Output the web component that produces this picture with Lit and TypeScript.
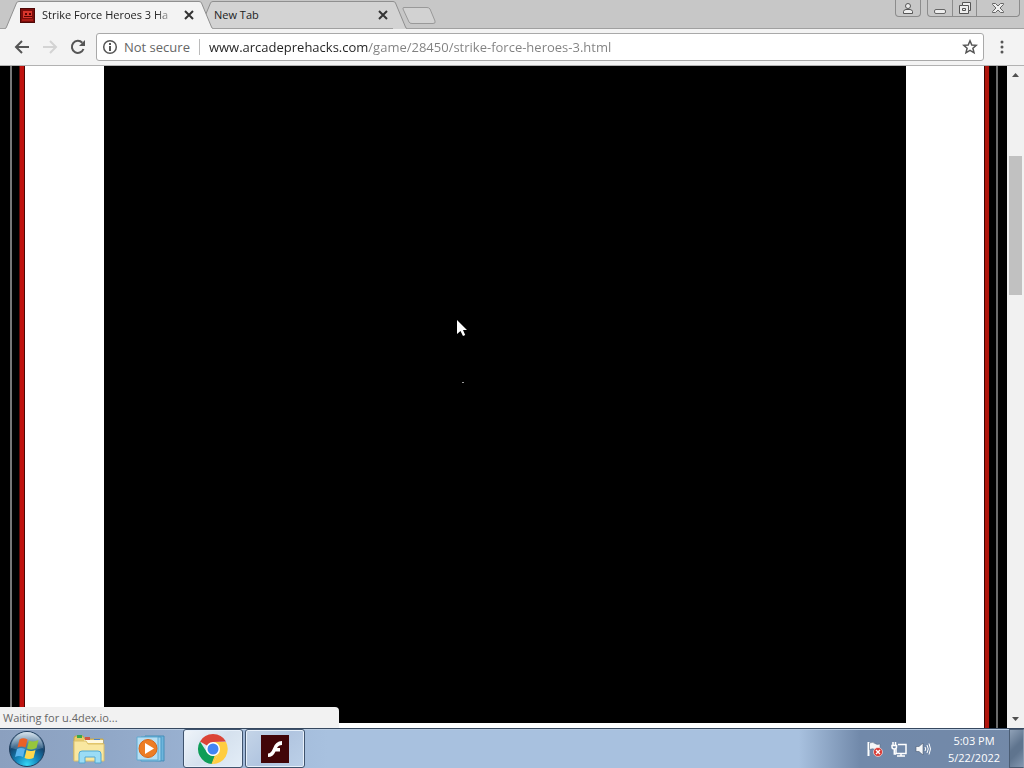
import { LitElement, html, css } from "lit";
import { customElement } from "lit/decorators.js";

const slantLeft = (fill: string) => html`
  <svg class="slant" width="14" height="28" viewBox="0 0 14 28" aria-hidden="true">
    <path d="M0 28L1.500 26L11.500 2Q12 .5 14 .5V28Z" fill=${fill} />
    <path d="M0 27.500Q1 27.500 1.500 26L11.500 2Q12 .5 14 .5" fill="none" stroke="#8f8f8f" />
  </svg>`;
const slantRight = (fill: string) => html`
  <svg class="slant" width="14" height="28" viewBox="0 0 14 28" aria-hidden="true">
    <path d="M14 28L12.500 26L2.500 2Q2 .5 0 .5V28Z" fill=${fill} />
    <path d="M14 27.500Q13 27.500 12.500 26L2.500 2Q2 .5 0 .5" fill="none" stroke="#8f8f8f" />
  </svg>`;
const cross = html`
  <svg width="10" height="10" viewBox="0 0 10 10" aria-hidden="true">
    <path d="M1 1L9 9M9 1L1 9" stroke="#333" stroke-width="2" />
  </svg>`;

@customElement("browser-tabs")
class BrowserTabs extends LitElement {
  static styles = css`
    :host { display: flex; height: 29px; background: #c7c7c7; padding-left: 5px; box-shadow: inset 0 -1px #a0a0a0; font: 11px/16px "Open Sans", "Noto Sans", sans-serif; color: #222; }
    .tab { display: flex; width: 208px; height: 28px; align-self: flex-end; }
    .tab + .tab { margin-left: -14px; }
    .active { position: relative; z-index: 1; }
    .slant { flex: none; display: block; }
    .face { flex: 1; min-width: 0; display: flex; align-items: center; gap: 7px; border-top: 1px solid #8f8f8f; background: #d3d3d3; border-bottom: 1px solid #a0a0a0; padding: 0 5px 0 1px; }
    .active .face { background: #f3f3f3; border-bottom-color: #f3f3f3; }
    .title { flex: 1; min-width: 0; overflow: hidden; white-space: nowrap; }
    .active .title { mask-image: linear-gradient(90deg, #000 84%, transparent); }
    button { border: 0; background: none; padding: 0; margin: 0; display: block; flex: none; }
    button svg, .fav { display: block; flex: none; }
    .new { align-self: flex-start; margin: 6px 0 0 -6px; }
    .controls { margin-left: auto; display: flex; gap: 6px; padding-right: 4px; align-items: flex-start; }
    .group { display: flex; border: 1px solid #8c8c8c; border-top: 0; border-radius: 0 0 4px 4px; height: 16px; }
    .group button { width: 24px; height: 16px; display: grid; place-items: center; }
    .group button + button { border-left: 1px solid #8c8c8c; }
    .group .close { width: 43px; }
  `;
  render() {
    return html`
      <div class="tab active">
        ${slantLeft("#f3f3f3")}
        <div class="face">
          <svg class="fav" width="15" height="15" viewBox="0 0 15 15" aria-hidden="true">
            <rect width="15" height="15" fill="#7c0d0b" /><path d="M3 3h9v7H3z" fill="#d9362c" />
            <path d="M5 5h2v2H5zM9 5h2v2H9zM4 8h8v1H4z" fill="#5b0503" /><path d="M2 12h11" stroke="#d62d22" />
            <rect x=".5" y=".5" width="14" height="14" fill="none" stroke="#4e0806" />
          </svg>
          <span class="title">Strike Force Heroes 3 Ha</span>
          <button aria-label="Close tab">${cross}</button>
        </div>
        ${slantRight("#f3f3f3")}
      </div>
      <div class="tab">
        ${slantLeft("#d3d3d3")}
        <div class="face"><span class="title">New Tab</span><button aria-label="Close tab">${cross}</button></div>
        ${slantRight("#d3d3d3")}
      </div>
      <button class="new" aria-label="New tab">
        <svg width="36" height="19" viewBox="0 0 36 19"><path d="M3 1.500H26Q28 1.500 29 3L34 15Q35 17.500 32 17.500H11Q8.500 17.500 8 16L2 3Q1.500 1.500 3 1.500Z" fill="#d2d2d2" stroke="#999" /></svg>
      </button>
      <div class="controls">
        <div class="group"><button aria-label="Profile">
          <svg width="12" height="13" viewBox="0 0 12 13" fill="#eee" stroke="#555"><circle cx="6" cy="4" r="2.500" /><path d="M1.500 11.500V9.500Q2 7.500 4 7.500H8Q10 7.500 10.500 9.500V11.500Z" /></svg>
        </button></div>
        <div class="group">
          <button aria-label="Minimize"><svg width="14" height="14" viewBox="0 0 14 14"><rect x="1.500" y="8.500" width="11" height="4" rx="1.500" fill="#eee" stroke="#666" /></svg></button>
          <button aria-label="Restore"><svg width="14" height="14" viewBox="0 0 14 14" fill="#eee" stroke="#555"><path d="M4.500 1.500H12.500V9.500H10.500V12.500H1.500V4.500H4.500Z" /><path d="M4.500 4.500H10.500V9.500M4.500 7.500H7.500V9.500H4.500Z" /></svg></button>
          <button class="close" aria-label="Close"><svg width="14" height="14" viewBox="0 0 14 14"><path d="M1.500 2.500H4.500L7 5L9.500 2.500H12.500V3.500L9 7L12.500 10.500V11.500H9.500L7 9L4.500 11.500H1.500V10.500L5 7L1.500 3.500Z" fill="#eee" stroke="#666" /></svg></button>
        </div>
      </div>`;
  }
}

@customElement("browser-toolbar")
class BrowserToolbar extends LitElement {
  static styles = css`
    :host { display: flex; align-items: center; height: 37px; box-sizing: border-box; background: #f3f3f3; border-bottom: 1px solid #b2b2b2; padding: 0 12px 0 12px; font: 13px/18px "Open Sans", "Noto Sans", sans-serif; }
    button { border: 0; background: none; padding: 0; flex: none; width: 20px; height: 20px; display: grid; place-items: center; }
    .nav { display: flex; gap: 8px; }
    .box { flex: 1; min-width: 0; height: 28px; box-sizing: border-box; border: 1px solid #a9a9a9; border-radius: 3px; background: #fff; display: flex; align-items: center; margin: 0 8px 0 8px; padding: 0 3px 0 5px; }
    .safe { color: #666; margin-left: 6px; white-space: nowrap; }
    .bar { width: 1px; height: 16px; background: #bbb; margin: 0 9px; }
    input { flex: 1; min-width: 0; border: 0; outline: 0; padding: 0; font: inherit; color: transparent; background: linear-gradient(90deg, #222 159px, #808080 159px) text; }
  `;
  render() {
    return html`
      <div class="nav">
        <button aria-label="Back"><svg width="16" height="16" viewBox="0 0 16 16"><path d="M15 8H2M8 2L2 8L8 14" fill="none" stroke="#555" stroke-width="2" /></svg></button>
        <button aria-label="Forward"><svg width="16" height="16" viewBox="0 0 16 16"><path d="M1 8H14M8 2L14 8L8 14" fill="none" stroke="#d3d3d3" stroke-width="2" /></svg></button>
        <button aria-label="Reload"><svg width="16" height="16" viewBox="0 0 16 16"><path d="M13.500 10A6 6 0 1 1 12.300 3.800" fill="none" stroke="#555" stroke-width="2" /><path d="M15 1V7H9Z" fill="#555" /></svg></button>
      </div>
      <div class="box">
        <svg width="16" height="16" viewBox="0 0 16 16" aria-hidden="true"><circle cx="8" cy="8" r="6.300" fill="none" stroke="#555" stroke-width="1.500" /><path d="M8 7V12M8 4V6" stroke="#555" stroke-width="2" /></svg>
        <span class="safe">Not secure</span><span class="bar"></span>
        <input aria-label="Address" value="www.arcadeprehacks.com/game/28450/strike-force-heroes-3.html" />
        <button aria-label="Bookmark this page"><svg width="16" height="16" viewBox="0 0 16 16"><path d="M8 1.800L9.800 6L14.300 6.300L10.900 9.300L12 13.800L8 11.400L4 13.800L5.100 9.300L1.700 6.300L6.200 6Z" fill="none" stroke="#555" stroke-width="1.500" /></svg></button>
      </div>
      <button aria-label="Menu"><svg width="4" height="14" viewBox="0 0 4 14" fill="#555"><circle cx="2" cy="2" r="1.500" /><circle cx="2" cy="7" r="1.500" /><circle cx="2" cy="12" r="1.500" /></svg></button>`;
  }
}

@customElement("browser-page")
class BrowserPage extends LitElement {
  static styles = css`
    :host { display: flex; flex: 1; min-height: 0; position: relative; background: #fff; }
    .left { width: 25px; background: linear-gradient(90deg, #000 10px, #777 10px, #777 12px, #000 12px, #000 19px, #5c0b08 19px, #5c0b08 20px, #c0120e 20px, #c0120e 24px, #4a0705 24px); }
    .right { width: 23px; background: linear-gradient(90deg, #3c0503 1px, #b0150d 1px, #b0150d 5px, #200 5px, #000 6px, #000 12px, #6b6b6b 12px, #6b6b6b 14px, #000 14px); }
    main { flex: 1; padding: 0 78px 5px 79px; display: flex; }
    .game { flex: 1; background: #000; position: relative; }
    .dash { position: absolute; left: 358px; top: 316px; width: 2px; height: 1px; background: #999; }
    .cursor { position: absolute; left: 352px; top: 253px; }
    .scroll { width: 17px; background: #f1f1f1; display: flex; flex-direction: column; align-items: center; box-sizing: border-box; padding: 6px 0; }
    .thumb { width: 13px; height: 139px; background: #c1c1c1; margin-top: 78px; margin-bottom: auto; }
    .status { position: absolute; left: 0; bottom: 0; width: 339px; box-sizing: border-box; height: 21px; padding: 0 3px; background: #f2f2f2; border-radius: 0 4px 0 0; font: 11px/21px "Open Sans", "Noto Sans", sans-serif; color: #666; z-index: 1; }
  `;
  render() {
    return html`
      <div class="left"></div>
      <main><div class="game">
        <svg class="cursor" width="12" height="19" viewBox="0 0 12 19"><path d="M1 1V15L4.500 12L7 17L9.200 16L7 11H11Z" fill="#fff" /></svg>
        <span class="dash"></span>
      </div></main>
      <div class="right"></div>
      <div class="scroll">
        <svg width="7" height="6" viewBox="0 0 7 6"><path d="M0 5L3.500 1L7 5Z" fill="#505050" /></svg>
        <div class="thumb"></div>
        <svg width="7" height="6" viewBox="0 0 7 6"><path d="M0 1L3.500 5L7 1Z" fill="#505050" /></svg>
      </div>
      <div class="status" role="status">Waiting for u.4dex.io...</div>`;
  }
}

@customElement("desktop-taskbar")
class DesktopTaskbar extends LitElement {
  static styles = css`
    :host { display: flex; height: 40px; box-sizing: border-box; border-top: 1px solid #36485f; box-shadow: inset 0 1px #b9cce2; background: linear-gradient(90deg, #8ba0bf 0, #90a7c7 10%, #9db5d5 22%, #a8c1df 32%, #a8c1df 78%, #7189aa 84%, #7389a8 100%); font: 11px/17px "Open Sans", "Noto Sans", sans-serif; }
    button { border: 0; background: none; padding: 0; display: grid; place-items: center; box-sizing: border-box; }
    .start { width: 54px; }
    .pin { width: 60px; margin-right: 2px; }
    .pins { display: flex; padding-left: 5px; }
    .win { width: 60px; margin-right: 2px; border: 1px solid #3f536d; border-radius: 3px; box-shadow: inset 0 0 0 1px #e7f0fa; background: linear-gradient(135deg, #c5d5e8, #b1c5e0 50%, #bcd0e8); }
    .on { background: linear-gradient(135deg, #f0f5fa, #d5e1ee 50%, #e3edf7); }
    .tray { margin-left: auto; display: flex; align-items: center; gap: 8px; }
    .icon { width: 16px; height: 18px; }
    .clock { color: #fff; text-align: center; width: 66px; padding: 3px 0; margin-left: 2px; }
    .show { width: 15px; align-self: stretch; border: 1px solid #4a5c73; border-right-color: #8a9bb0; background: linear-gradient(135deg, #8fa1b7, #5f748e 45%, #5f748e 60%, #8397b0); margin-left: -6px; }
  `;
  render() {
    return html`
      <button class="start" aria-label="Start">
        <svg width="38" height="38" viewBox="0 0 38 38">
          <defs>
            <radialGradient id="orb" cx=".5" cy=".95" r=".9"><stop offset="0" stop-color="#35d7f5" /><stop offset=".35" stop-color="#1587bd" /><stop offset=".7" stop-color="#14456f" /><stop offset="1" stop-color="#7392ae" /></radialGradient>
            <linearGradient id="shine" x1="0" y1="0" x2="0" y2="1"><stop offset="0" stop-color="#e6f0f7" stop-opacity=".85" /><stop offset="1" stop-color="#9fbad0" stop-opacity=".2" /></linearGradient>
          </defs>
          <circle cx="19" cy="19" r="17.500" fill="url(#orb)" stroke="#213e5d" />
          <path d="M3 18A16 16 0 0 1 35 18Q19 23 3 18Z" fill="url(#shine)" />
          <path d="M11.500 9.500Q15 7 19.500 9.500L17.500 17.500Q13.500 15.500 9.500 17.500Z" fill="#ec6127" />
          <path d="M21 10.500Q25.500 12.500 30.500 10L28.500 18Q24 20.500 19 18.500Z" fill="#96c63c" />
          <path d="M9 19Q13 17 17 19L15 27Q11 25 7 27Z" fill="#5ab4ee" />
          <path d="M18.500 20Q23 22 27.500 20L25.500 28Q21 30 16.500 28Z" fill="#ffd84d" />
        </svg>
      </button>
      <div class="pins">
        <button class="pin" aria-label="File Explorer">
          <svg width="34" height="30" viewBox="0 0 34 30">
            <path d="M2 4Q2 2 4 2H11L13 5H31V26H2Z" fill="#e9cc6b" stroke="#c5a64a" />
            <path d="M5 1h5v3H5z" fill="#39a84a" /><path d="M13 3h5v3h-5z" fill="#cf5542" /><path d="M22 5h6v3h-6z" fill="#4984d0" />
            <path d="M12 6H31V9H12z" fill="#fff8dd" /><path d="M2 7H14L16 10H32V27H2Z" fill="#f9e7a0" stroke="#dcc06a" />
            <path d="M7 29V20Q7 17 10 17H26Q29 17 29 20V29H23V23H13V29Z" fill="#9bdcf5" stroke="#53a8d2" />
          </svg>
        </button>
        <button class="pin" aria-label="Media Player">
          <svg width="30" height="28" viewBox="0 0 30 28">
            <path d="M9 1H28V26L9 25Z" fill="#6db5dc" stroke="#448eb9" /><path d="M5 2H25V26H5Z" fill="#9dd3ee" stroke="#4997c4" /><path d="M1 2H22V25H1Z" fill="#b7dff3" stroke="#5faad1" />
            <circle cx="12" cy="13.500" r="9" fill="#ed7d24" stroke="#d66415" /><path d="M9 8V19L18 13.500Z" fill="#fff" />
          </svg>
        </button>
        <button class="win on" aria-label="Chrome">
          <svg width="32" height="32" viewBox="0 0 32 32">
            <path d="M16 16L3 8.500A15 15 0 0 1 29 8.500L16 9Z" fill="#db4437" /><path d="M16 9H29A15 15 0 0 1 16 31L22 19.500Z" fill="#ffcd40" /><path d="M3 8.500L10 19.500Q13 23 18 23L15 31A15 15 0 0 1 3 8.500Z" fill="#0f9d58" />
            <path d="M18 22L22 19.500L16 31H14.500Z" fill="#ffcd40" />
            <circle cx="16" cy="16" r="7" fill="#fff" /><circle cx="16" cy="16" r="5.500" fill="#4285f4" />
          </svg>
        </button>
        <button class="win" aria-label="Flash Player">
          <svg width="28" height="28" viewBox="0 0 28 28"><rect width="28" height="28" fill="#410508" /><path d="M21 6V10Q17.500 10 16 13H19V16.500H14.500Q12 22 7 22V18.500Q10 18.500 12 13.500Q14.500 6 21 6Z" fill="#fff" /></svg>
        </button>
      </div>
      <div class="tray">
        <button class="icon" aria-label="Action Center"><svg width="16" height="16" viewBox="0 0 16 16"><path d="M1.500 1V15" stroke="#fff" stroke-width="2" /><path d="M2.500 2Q6 .5 8 2.500Q10 4 13 3V9Q10 10 8 8.500Q6 7 2.500 8.500Z" fill="#f4f6f8" stroke="#53657b" stroke-width=".5" /><circle cx="11" cy="11" r="4.500" fill="#d93832" stroke="#fff" stroke-width=".6" /><path d="M9 9L13 13M13 9L9 13" stroke="#fff" stroke-width="1.400" /></svg></button>
        <button class="icon" aria-label="Network"><svg width="16" height="16" viewBox="0 0 16 16" fill="none" stroke="#fff" stroke-width="1.500"><path d="M7 3.500H15V12.500H5V8M6 15H14M10 12.500V15" /><path d="M1 4.500H5.500V6Q5.500 8 3.300 8Q1 8 1 6ZM2 1V4M4.500 1V4M3.300 8V13H5" /></svg></button>
        <button class="icon" aria-label="Volume"><svg width="16" height="16" viewBox="0 0 16 16"><path d="M1 5.500H4L8 2V14L4 10.500H1Z" fill="#f4f6f8" stroke="#4b5d73" stroke-width=".6" /><path d="M10 6Q11.500 8 10 10M12 4Q14.500 8 12 12M14 2.500Q17 8 14 13.500" fill="none" stroke="#fff" /></svg></button>
        <div class="clock"><div>5:03 PM</div><div>5/22/2022</div></div>
        <button class="show" aria-label="Show desktop"></button>
      </div>`;
  }
}

@customElement("app-root")
class AppRoot extends LitElement {
  static styles = css`
    :host { display: flex; flex-direction: column; height: 100vh; overflow: hidden; }
  `;
  render() {
    return html`<browser-tabs></browser-tabs><browser-toolbar></browser-toolbar><browser-page></browser-page><desktop-taskbar></desktop-taskbar>`;
  }
}
